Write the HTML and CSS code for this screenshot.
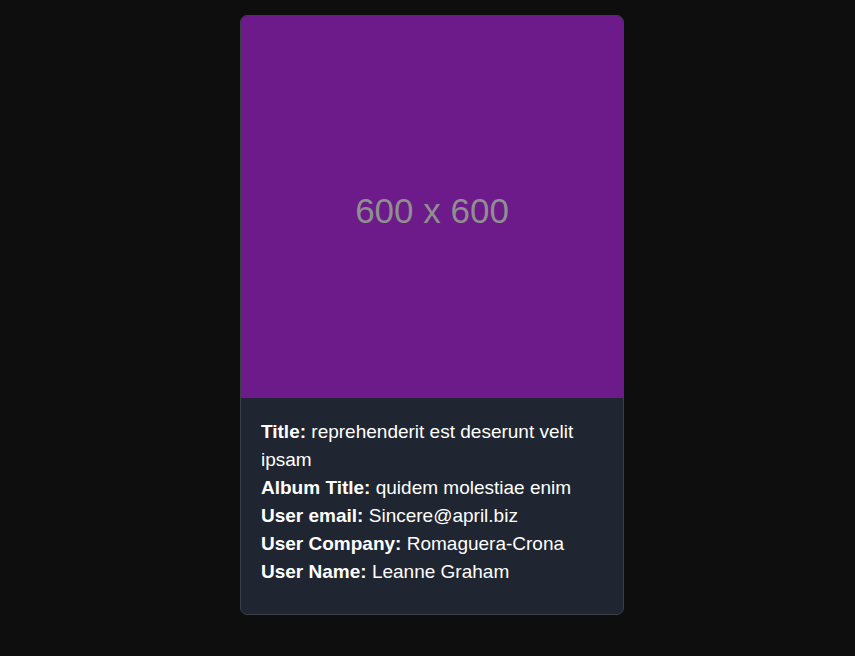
FILE: index.html
```html
<!DOCTYPE html>
<html>
<head>
<meta charset="utf-8">
<link rel="stylesheet" href="styles.css">
</head>
<body>
<div class="page">
  <div class="card">
    <div class="thumb"><span class="thumb-text">600 x 600</span></div>
    <div class="info">
      <p><b>Title:</b> reprehenderit est deserunt velit ipsam</p>
      <p><b>Album Title:</b> quidem molestiae enim</p>
      <p><b>User email:</b> Sincere@april.biz</p>
      <p><b>User Company:</b> Romaguera-Crona</p>
      <p><b>User Name:</b> Leanne Graham</p>
    </div>
  </div>
</div>
</body>
</html>
```
FILE: styles.css
```css
html, body {
  margin: 0;
  padding: 0;
  background: #0e0e0e;
  font-family: "Liberation Sans", Arial, sans-serif;
}
.page {
  padding: 15px 0 0 240px;
}
.card {
  width: 382px;
  border: 1px solid #3a3f48;
  border-radius: 7px;
  overflow: hidden;
  background: #1f2631;
}
.thumb {
  width: 382px;
  height: 382px;
  background: #6d1a8a;
  display: flex;
  align-items: center;
  justify-content: center;
}
.thumb-text {
  color: #8f8f8f;
  font-size: 35px;
  padding-top: 8px;
}
.info {
  padding: 20px 20px 28px 20px;
  color: #ffffff;
  font-size: 19px;
  line-height: 28px;
}
.info p {
  margin: 0;
}
```
